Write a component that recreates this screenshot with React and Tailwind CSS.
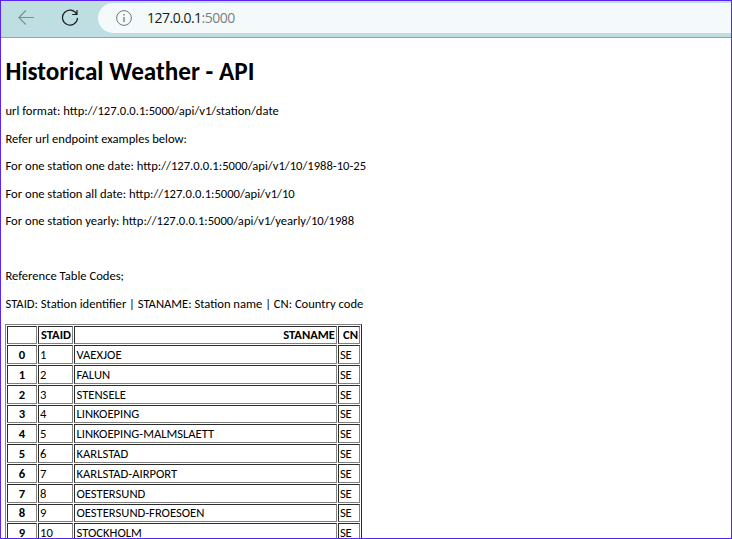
const stations = [
  ['1', 'VAEXJOE', 'h-[19px]'],
  ['2', 'FALUN', 'h-[19px]'],
  ['3', 'STENSELE', 'h-[19px]'],
  ['4', 'LINKOEPING', 'h-[18px]'],
  ['5', 'LINKOEPING-MALMSLAETT', 'h-[19px]'],
  ['6', 'KARLSTAD', 'h-[19px]'],
  ['7', 'KARLSTAD-AIRPORT', 'h-[19px]'],
  ['8', 'OESTERSUND', 'h-[19px]'],
  ['9', 'OESTERSUND-FROESOEN', 'h-[18px]'],
  ['10', 'STOCKHOLM', 'h-[19px]'],
];

const cell =
  'border border-t-[#2c2c2c] border-l-[#2c2c2c] border-r-[#808080] border-b-[#808080] p-0 align-middle leading-4 whitespace-nowrap';

function Toolbar() {
  return (
    <header className="flex h-[37px] shrink-0 items-start border-b border-[#93a5ac] bg-[#bfdee1]">
      <svg className="mt-2 ml-[17px] h-[18px] w-4 shrink-0" viewBox="0 0 16 18" fill="none" stroke="#7b8e91" strokeWidth="1.1">
        <path d="M16 8.5H.8M7.8 1.5l-7 7 7 7" />
      </svg>
      <svg className="mt-2 ml-[27px] h-[18px] w-[18px] shrink-0" viewBox="0 0 18 18" fill="none" stroke="#172022" strokeWidth="1.2">
        <path d="M15.7 5.2A7.5 7.5 0 1 0 16.5 9M16 1v4.5h-4.8" />
      </svg>
      <div className="mt-0.5 ml-[19px] flex h-[30px] flex-1 items-center rounded-l-full bg-[#f3faf9] pl-[18px]">
        <svg className="h-4 w-4 shrink-0" viewBox="0 0 16 16" fill="none" stroke="#747879" strokeWidth="1">
          <circle cx="8" cy="8" r="7.4" />
          <path d="M8 7v5M8 4v1.5" strokeWidth="1.3" />
        </svg>
        <div className="ml-[15px] pb-0.5 font-['Open_Sans',sans-serif] text-[14px] tracking-[-0.5px] text-[#7c8182]">
          <span className="text-[#171b1b]">127.0.0.1</span>:5000
        </div>
      </div>
    </header>
  );
}

export default function App() {
  return (
    <div className="flex h-[539px] w-[732px] flex-col overflow-hidden border border-[#5a24f5] bg-white font-[Calibri,Carlito,Lato,sans-serif] text-[12.6px] text-black">
      <Toolbar />
      <main className="pt-[17px] pl-1 whitespace-nowrap">
        <h1 className="h-[33px] pl-[0.5px] text-[25.2px] leading-[33px] font-bold">Historical Weather - API</h1>
        <div className="mt-[15px] flex flex-col gap-[11.55px] pl-[0.5px] leading-4">
          <p>url format: http://127.0.0.1:5000/api/v1/station/date</p>
          <p>Refer url endpoint examples below:</p>
          <p>For one station one date: http://127.0.0.1:5000/api/v1/10/1988-10-25</p>
          <p>For one station all date: http://127.0.0.1:5000/api/v1/10</p>
          <p>For one station yearly: http://127.0.0.1:5000/api/v1/yearly/10/1988</p>
          <p className="h-4" />
          <p>Reference Table Codes;</p>
          <p>STAID: Station identifier | STANAME: Station name | CN: Country code</p>
        </div>
        <table className="mt-[12.2px] w-[357px] table-fixed border-separate border-spacing-[1px] border border-t-[#808080] border-r-[#2c2c2c] border-b-[#2c2c2c] border-l-[#808080]">
          <colgroup>
            <col className="w-[30px]" />
            <col className="w-[35px]" />
            <col className="w-[263px]" />
            <col className="w-[22px]" />
          </colgroup>
          <thead>
            <tr className="h-[18px] text-right">
              <th className={cell} />
              <th className={cell + ' pr-px'}>STAID</th>
              <th className={cell + ' pr-px'}>STANAME</th>
              <th className={cell + ' pr-px'}>CN</th>
            </tr>
          </thead>
          <tbody>
            {stations.map(([id, name, height], index) => (
              <tr key={id} className={height}>
                <th className={cell}>{index}</th>
                <td className={cell + ' pl-px'}>{id}</td>
                <td className={cell + ' pl-[1.5px]'}>{name}</td>
                <td className={cell + ' pl-px tracking-[-0.3px]'}>SE</td>
              </tr>
            ))}
          </tbody>
        </table>
      </main>
    </div>
  );
}
